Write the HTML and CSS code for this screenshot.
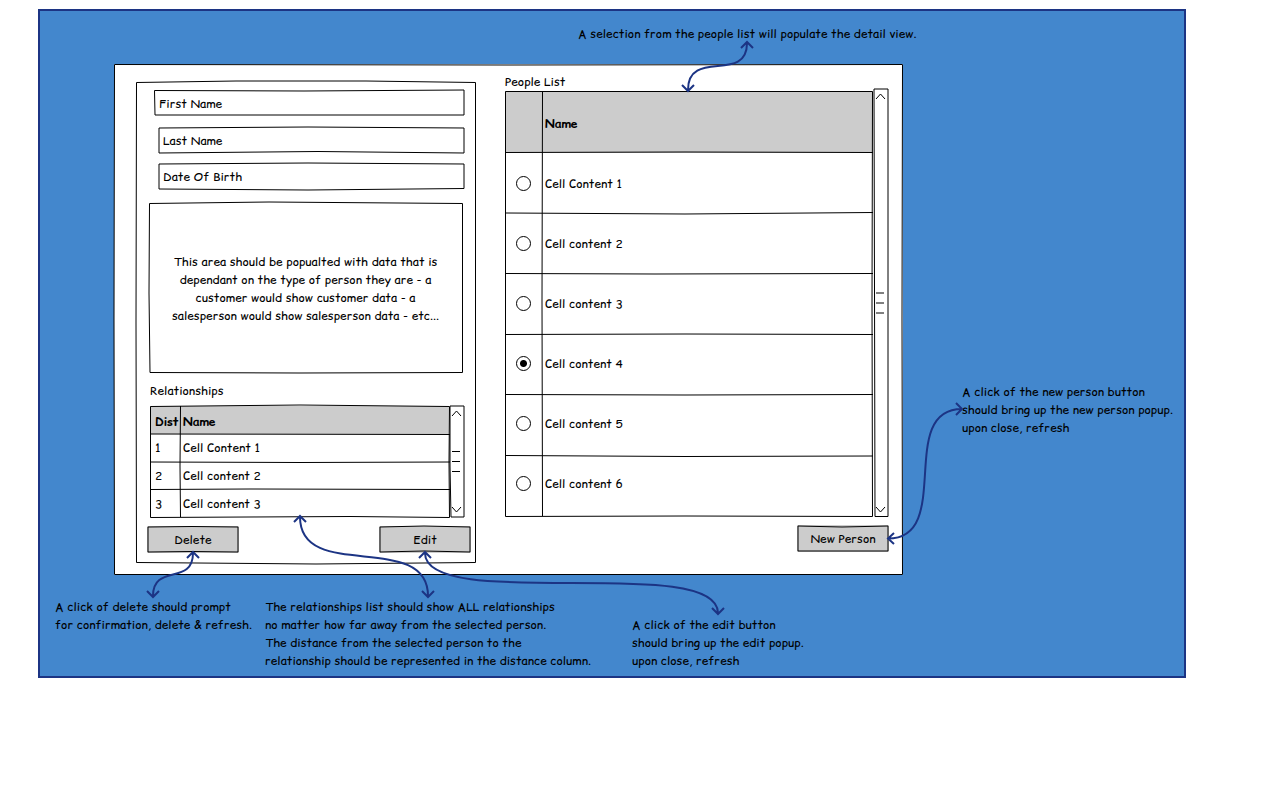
FILE: index.html
```html
<!DOCTYPE html>
<html lang="en">
<head>
<meta charset="utf-8">
<title>People detail view</title>
<link rel="stylesheet" href="styles.css">
</head>
<body>
<main class="board">
  <p class="note note-top">A selection from the people list will populate the detail view.</p>
  <div class="middle">
    <section class="window">
      <svg class="lines" viewBox="0 0 789 511" preserveAspectRatio="none" aria-hidden="true"><path d="M.5 .5L394 1L788.5 .5L788 255L788.5 510.5H.5L0 255Z"/></svg>
      <form class="panel">
        <svg class="lines" viewBox="0 0 340 482" preserveAspectRatio="none" aria-hidden="true"><path d="M.5 .5L100 -1L230 -1L339.5 .5V480.500L180 482L.5 480.5L0 240Z"/></svg>
        <div class="field field-first">
          <svg class="lines" viewBox="0 0 311 26" preserveAspectRatio="none" aria-hidden="true"><path d="M.5 .5L150 1L310 0V25H1Z"/></svg>
          <input type="text" aria-label="First Name" placeholder="First Name">
        </div>
        <div class="field">
          <svg class="lines" viewBox="0 0 307 26" preserveAspectRatio="none" aria-hidden="true"><path d="M1 1L150 0L306 1V26L160 24.500L1 26Z"/></svg>
          <input type="text" aria-label="Last Name" placeholder="Last Name">
        </div>
        <div class="field">
          <svg class="lines" viewBox="0 0 307 26" preserveAspectRatio="none" aria-hidden="true"><path d="M1 1L150 0L306 1V25.500L150 27L1 26Z"/></svg>
          <input type="text" aria-label="Date Of Birth" placeholder="Date Of Birth">
        </div>
        <div class="typed">
          <svg class="lines" viewBox="0 0 315 171" preserveAspectRatio="none" aria-hidden="true"><path d="M.5 .5L120 -1L313.500 .5V169.500L150 170L1 169.500L0 90Z"/></svg>
          <p>This area should be popualted with data that is<br>dependant on the type of person they are - a<br>customer would show customer data - a<br>salesperson would show salesperson data - etc...</p>
        </div>
        <h2 class="caption">Relationships</h2>
        <div class="listing">
          <div class="sheet">
            <table class="relations" aria-label="Relationships">
              <thead><tr><th>Dist</th><th>Name</th></tr></thead>
              <tbody>
                <tr><td>1</td><td>Cell Content 1</td></tr>
                <tr><td>2</td><td>Cell content 2</td></tr>
                <tr><td>3</td><td>Cell content 3</td></tr>
              </tbody>
            </table>
            <svg class="lines" viewBox="0 0 300 112" preserveAspectRatio="none" aria-hidden="true"><path d="M.5 .5L150 -1L299.500 .5L299 56L299.500 111.500L200 110.500L.5 111.500ZM.5 28L300 28.500M.5 56L150 56.500L300 56M.5 83.500L100 83L300 83.500M30.500 0L30 60L30.500 111"/></svg>
          </div>
          <svg class="scroll" viewBox="0 0 15 112" preserveAspectRatio="none" aria-hidden="true"><path d="M0 0L14 0V111H1L0 60ZM2 10L6.500 5L11 10M2 101L6.500 106L11 101M2 45.500H10M2 55.500H10M2 65.500H10"/></svg>
        </div>
        <div class="actions">
          <button type="button"><svg class="lines" viewBox="0 0 92 27" preserveAspectRatio="none" aria-hidden="true"><path d="M1 1L45 .5L91 1V26L45 25.500L1 26Z"/></svg>Delete</button>
          <button type="button"><svg class="lines" viewBox="0 0 92 27" preserveAspectRatio="none" aria-hidden="true"><path d="M1 1L45 0L91 1V26L45 25L1 26Z"/></svg>Edit</button>
        </div>
      </form>
      <section class="people">
        <h2 class="caption">People List</h2>
        <div class="listing">
          <div class="sheet">
            <table class="persons" aria-label="People List">
              <thead><tr><th></th><th>Name</th></tr></thead>
              <tbody>
                <tr><td><input type="radio" name="person" id="p1"></td><td><label for="p1">Cell Content 1</label></td></tr>
                <tr><td><input type="radio" name="person" id="p2"></td><td><label for="p2">Cell content 2</label></td></tr>
                <tr><td><input type="radio" name="person" id="p3"></td><td><label for="p3">Cell content 3</label></td></tr>
                <tr><td><input type="radio" name="person" id="p4" checked></td><td><label for="p4">Cell content 4</label></td></tr>
                <tr><td><input type="radio" name="person" id="p5"></td><td><label for="p5">Cell content 5</label></td></tr>
                <tr><td><input type="radio" name="person" id="p6"></td><td><label for="p6">Cell content 6</label></td></tr>
              </tbody>
            </table>
            <svg class="lines" viewBox="0 0 368 426" preserveAspectRatio="none" aria-hidden="true"><path d="M.5 .5H367.500L367 213L367.500 425.500L180 425L.5 425.500ZM.5 61.500L180 61L368 61.500M.5 122L180 123L368 121.500M.5 182.500L150 183L368 182.500M.5 243.500L180 243L368 243.500M.5 303.500L180 304L368 303.500M.5 364.500L180 365.500L368 365M37.500 0L37 210L37.500 425"/></svg>
          </div>
          <svg class="scroll scroll-people" viewBox="0 0 15 428" preserveAspectRatio="none" aria-hidden="true"><path d="M0 0H14V427.500H1L.5 200ZM2 10L6.500 5L11 10M2 418L6.500 423L11 418M2 204H10M2 214H10M2 224H10"/></svg>
        </div>
        <button type="button"><svg class="lines" viewBox="0 0 92 27" preserveAspectRatio="none" aria-hidden="true"><path d="M1 1L45 2L91 1V26H1Z"/></svg>New Person</button>
      </section>
    </section>
    <p class="note note-side">A click of the new person button<br>should bring up the new person popup.<br>upon close, refresh</p>
  </div>
  <div class="bottom">
    <p class="note">A click of delete should prompt<br>for confirmation, delete &amp; refresh.</p>
    <p class="note">The relationships list should show ALL relationships<br>no matter how far away from the selected person.<br>The distance from the selected person to the<br>relationship should be represented in the distance column.</p>
    <p class="note note-edit">A click of the edit button<br>should bring up the edit popup.<br>upon close, refresh</p>
  </div>
  <svg class="arrows" viewBox="40 11 1144 665" preserveAspectRatio="none" aria-hidden="true">
    <path d="M688 90C688 48 747 84 747 43M682 85L688 91L694 85M741 48L747 42L753 48"/>
    <path d="M153 596C153 563 193 586 193 553M147 591L153 597L159 591M187 558L193 552L199 558"/>
    <path d="M300 517C300 583 428 530 428 596M294 522L300 516L306 522M422 591L428 597L434 591"/>
    <path d="M425 553C425 613 718 553 718 613M419 558L425 552L431 558M712 608L718 614L724 608"/>
    <path d="M888 538.500C954 538.500 896 409 962 409M894 533L888 538.500L894 544M956 403L962 409L956 415"/>
  </svg>
</main>
</body>
</html>
```
FILE: styles.css
```css
* { box-sizing: border-box; }

body {
  margin: 0;
  background: #fff;
  color: #000;
  font-family: "Comic Relief", "Comic Sans MS", cursive;
  font-size: 12px;
  line-height: 18px;
}

p, h2 { margin: 0; font-size: inherit; font-weight: 400; }

input, button { font: inherit; color: inherit; }

.board {
  position: relative;
  margin: 9px 94px 0 38px;
  padding: 14px 0 6px;
  border: 2px solid #1c3484;
  background: #4387cd;
}

.note { white-space: nowrap; }
.note-top { padding-left: 538px; }

.middle {
  display: flex;
  gap: 59px;
  padding: 21px 0 23px 74px;
}

.note-side { flex: 0 0 222px; padding-top: 319px; }

.window {
  position: relative;
  flex: 1;
  display: flex;
  gap: 29px;
  padding: 9px 14px 11px 22px;
  background: #fff;
}

.lines {
  position: absolute;
  inset: 0;
  width: 100%;
  height: 100%;
  overflow: visible;
  pointer-events: none;
}

.lines path, .scroll path {
  fill: none;
  stroke: #000;
  stroke-width: 1px;
  vector-effect: non-scaling-stroke;
}

.panel {
  position: relative;
  flex: 0 0 340px;
  margin-top: 9px;
  padding: 8px 5px 11px 11px;
}

.field {
  position: relative;
  margin: 0 6px 10px 11px;
}
.field-first { margin: 0 6px 11px 7px; }

.field input {
  display: block;
  width: 100%;
  height: 26px;
  padding: 0 5px;
  border: 0;
  background: transparent;
}
.field input::placeholder { color: #000; opacity: 1; }

.typed {
  position: relative;
  display: flex;
  align-items: center;
  justify-content: center;
  height: 171px;
  margin: 14px 7px 8px 2px;
  padding-right: 2px;
  text-align: center;
  white-space: nowrap;
}

.panel .caption { margin: 0 0 6px 3px; }

.listing { display: flex; }
.sheet { position: relative; flex: 1; }
.panel .listing { margin: 0 6px 8px 3px; }

table {
  width: 100%;
  table-layout: fixed;
  border-collapse: collapse;
}
th, td { padding: 0 0 0 3px; text-align: left; white-space: nowrap; }
th { padding-top: 3px; background: #ccc; font-weight: 700; }

.relations tr { height: 28px; }
.relations th:first-child { width: 30px; }
.relations th:first-child, .relations td:first-child { padding-left: 5px; }

.persons th { height: 62px; }
.persons td { height: 60px; padding-top: 2px; }
.persons th:first-child { width: 37px; }
.persons td:first-child { padding: 0; text-align: center; }

input[type="radio"] {
  appearance: none;
  display: block;
  width: 15px;
  height: 15px;
  margin: 0 auto;
  border: 1px solid #000;
  border-radius: 50%;
  background: #fff;
}
input[type="radio"]:checked {
  background: radial-gradient(circle, #000 3px, #fff 4px);
}

.scroll {
  flex: 0 0 15px;
  width: 15px;
  height: 112px;
  overflow: visible;
}
.people .listing { gap: 1px; margin-bottom: 8px; }
.scroll-people { height: 428px; margin-top: -2px; }

.actions { display: flex; justify-content: space-between; }

button {
  position: relative;
  width: 92px;
  height: 27px;
  padding: 0;
  border: 0;
  background: #ccc;
}

.people { flex: 1; display: flex; flex-direction: column; }
.people button { align-self: flex-end; }

.bottom {
  display: grid;
  grid-template-columns: 210px 367px 1fr;
  padding-left: 15px;
}
.note-edit { padding-top: 18px; }

.arrows {
  position: absolute;
  inset: 0;
  width: 100%;
  height: 100%;
  pointer-events: none;
}
.arrows path {
  fill: none;
  stroke: #1c3484;
  stroke-width: 2px;
  vector-effect: non-scaling-stroke;
}
```
